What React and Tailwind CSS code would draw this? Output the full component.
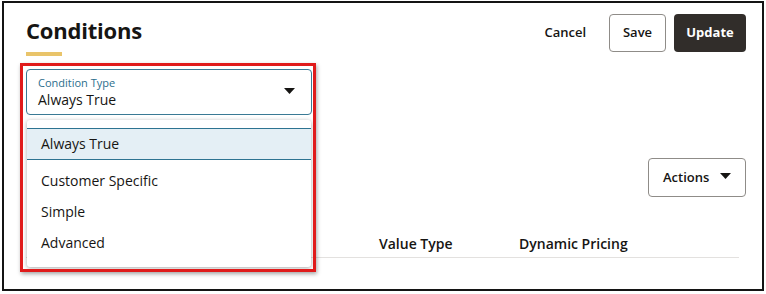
import React from "react";

const font = { fontFamily: '"Open Sans", "Noto Sans", sans-serif' };

// Small solid caret used in the select and the Actions button
const Caret = ({ className }) => (
    <svg className={className} width="11" height="6" viewBox="0 0 11 6" fill="#161513">
        <path d="M0 0h11L5.5 6z" />
    </svg>
);

const options = ["Customer Specific", "Simple", "Advanced"];

const App = () => {
    return (
        <div className="w-[766px] h-[294px] bg-white" style={font}>
            <div className="ml-[2px] mt-[1px] w-[762px] h-[290px] border-2 border-[#141414] pl-[22px] pr-[16px] pt-[11px] text-[#161513]">
                {/* Header */}
                <div className="flex justify-between items-start">
                    <div className="pt-[1px]">
                        <h1 className="text-[22px] leading-[30px] font-bold tracking-[-0.2px]">Conditions</h1>
                        <div className="mt-[7px] w-[36px] h-[4px] bg-[#e9c46a]" />
                    </div>
                    <div className="flex items-center">
                        <button className="h-[38px] px-[12px] text-[13px] font-semibold mr-[11px]">Cancel</button>
                        <button className="h-[38px] w-[57px] border border-[#8f8c88] rounded-[4px] text-[13px] font-semibold">
                            Save
                        </button>
                        <button className="h-[38px] w-[72px] ml-[8px] bg-[#312d2a] rounded-[4px] text-[13px] font-bold text-white">
                            Update
                        </button>
                    </div>
                </div>

                {/* Condition type select with open dropdown */}
                <div className="relative mt-[13px] w-[286px]">
                    <div className="h-[46px] border border-[#3a7a95] rounded-[4px] pl-[11px] pr-[16px] pt-[6px] flex justify-between">
                        <div>
                            <div className="text-[11px] leading-[14px] text-[#2c6e8d]">Condition Type</div>
                            <div className="text-[14px] leading-[19px]">Always True</div>
                        </div>
                        <Caret className="mt-[12px]" />
                    </div>

                    {/* Dropdown panel */}
                    <div className="absolute left-[1px] top-[51px] w-[284px] bg-white rounded-[3px] shadow-[0_1px_4px_rgba(0,0,0,0.35)] pt-[8px] pb-[9px] z-10">
                        <div className="h-[32px] border-y border-[#2d7391] bg-[#e4eff5] pl-[14px] flex items-center text-[14px] pb-[2px]">
                            Always True
                        </div>
                        <ul className="pt-[5px]">
                            {options.map((o) => (
                                <li key={o} className="h-[31px] pl-[14px] flex items-center text-[14px]">
                                    {o}
                                </li>
                            ))}
                        </ul>
                    </div>

                    {/* Red annotation box */}
                    <div className="absolute -left-[6px] -top-[6px] w-[296px] h-[209px] border-[3px] border-[#e01b1b] shadow-[1px_2px_4px_rgba(0,0,0,0.35)] z-20 pointer-events-none" />
                </div>

                {/* Actions */}
                <div className="flex justify-end mt-[43px]">
                    <button className="h-[39px] w-[98px] border border-[#8f8c88] rounded-[4px] flex items-center pl-[14px] pr-[14px] justify-between text-[13px] font-semibold">
                        <span className="mt-[1px]">Actions</span>
                        <Caret className="-mt-[4px]" />
                    </button>
                </div>

                {/* Table header */}
                <div className="mt-[34px] mr-[7px] grid grid-cols-[353px_140px_1fr] border-b border-[#e3e1df] pt-[3px] pb-[3px] text-[14px] leading-[20px] font-semibold">
                    <div />
                    <div>Value Type</div>
                    <div>Dynamic Pricing</div>
                </div>
            </div>
        </div>
    );
};

export default App;
